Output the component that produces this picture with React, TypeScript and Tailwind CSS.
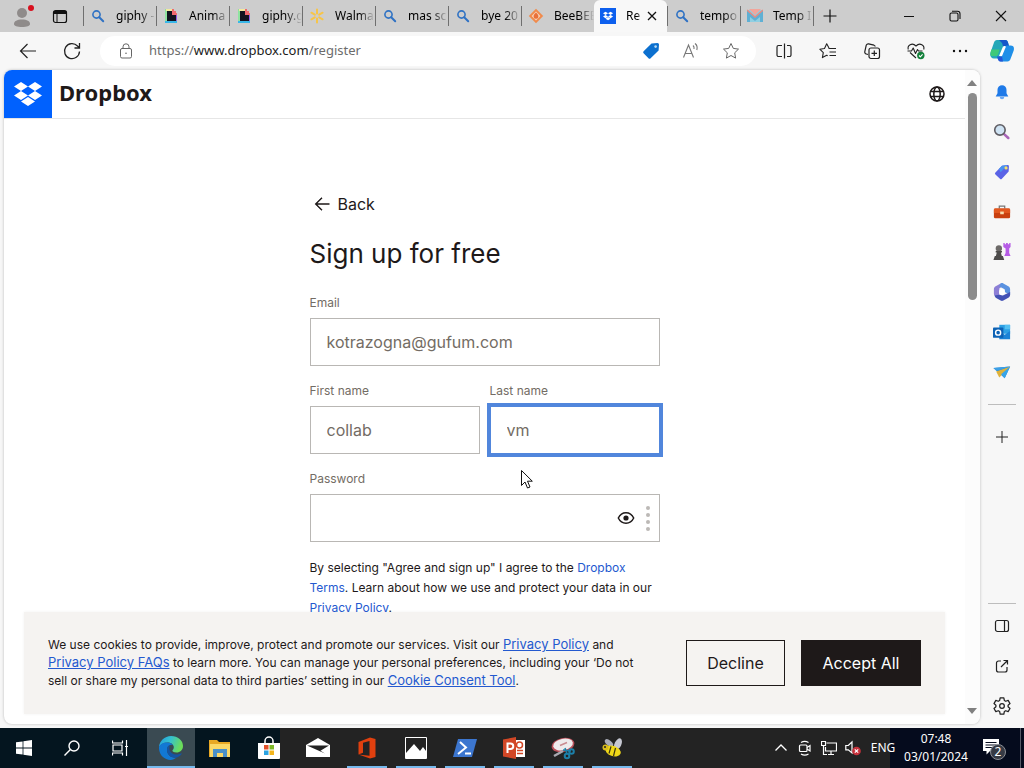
import { useState } from "react";
import type { ReactNode } from "react";

const SearchIcon = () => (
  <svg viewBox="0 0 16 16" className="size-4" fill="none" stroke="#2f72c4">
    <circle cx="6.5" cy="6.5" r="3.6" strokeWidth="1.6" />
    <path d="M9.2 9.2l4 4" strokeWidth="2" strokeLinecap="round" />
  </svg>
);

const GiphyIcon = () => (
  <svg viewBox="0 0 16 16" className="size-4">
    <path d="M2 1h2v13H2z" fill="#8fe3a0" />
    <path d="M3 1h6v2H3z" fill="#f3e9a0" />
    <path d="M12 6h2v8h-2z" fill="#8f5be8" />
    <path d="M2 13h12v2H2z" fill="#39b6e8" />
    <path d="M9 1h2v2h2v2h1v2H9z" fill="#ef6a6f" />
    <path d="M4 3h5v4h4v6H4z" fill="#12131f" />
  </svg>
);

const WalmartIcon = () => (
  <svg viewBox="0 0 16 16" className="size-4" stroke="#f7c548" strokeWidth="2" strokeLinecap="round">
    <path d="M8 1.500v4M8 10.500v4M2.400 4.700l3.400 2M10.200 9.300l3.400 2M13.600 4.700l-3.400 2M5.800 9.300l-3.400 2" />
  </svg>
);

const GitIcon = () => (
  <svg viewBox="0 0 16 16" className="size-4">
    <path d="M8 .8L15.200 8 8 15.200.8 8z" fill="#f08a4b" />
    <path d="M8 3.600L12.400 8 8 12.400 3.600 8z" fill="#f7d3bb" />
    <path d="M8 4.600c2 1.600 2.400 3 2.400 3.800A2.300 2.300 0 018 10.800a2.300 2.300 0 01-2.400-2.400c0-.8.4-2.200 2.400-3.800z" fill="#e8703a" />
  </svg>
);

const MailTabIcon = () => (
  <svg viewBox="0 0 16 16" className="size-4">
    <path d="M0 2h16v12H0z" fill="#8fcfe2" />
    <path d="M2 1h12L8 7z" fill="#f2a59b" />
    <path d="M0 2l8 7 8-7v12h-3V9l-5 4-5-4v5H0z" fill="#5fb0d4" />
    <path d="M0 2l8 7 8-7" stroke="#e98b80" strokeWidth="1.500" fill="none" />
  </svg>
);

const DROPBOX_PATH =
  "M6 1.8L0 5.6l6 3.8 6-3.8zM18 1.8l-6 3.8 6 3.8 6-3.8zM0 13.3l6 3.8 6-3.8-6-3.9zM18 9.4l-6 3.9 6 3.8 6-3.8zM6 18.4l6 3.8 6-3.8-6-3.9z";

const DropboxIcon = () => (
  <svg viewBox="0 0 16 16" className="size-4">
    <path d="M0 0h16v16H0z" fill="#0d5fee" />
    <path d={DROPBOX_PATH} fill="#fff" transform="translate(3 3) scale(.42)" />
  </svg>
);

type Tab = { title: string; icon: ReactNode; active?: boolean };

const tabs: Tab[] = [
  { title: "giphy -", icon: <SearchIcon /> },
  { title: "Anima", icon: <GiphyIcon /> },
  { title: "giphy.g", icon: <GiphyIcon /> },
  { title: "Walma", icon: <WalmartIcon /> },
  { title: "mas sc", icon: <SearchIcon /> },
  { title: "bye 20", icon: <SearchIcon /> },
  { title: "BeeBEE", icon: <GitIcon /> },
  { title: "Re", icon: <DropboxIcon />, active: true },
  { title: "tempo", icon: <SearchIcon /> },
  { title: "Temp I", icon: <MailTabIcon /> },
];

const TabBar = () => (
  <div className="flex h-8 shrink-0 items-stretch bg-[#cdcdcd] text-black">
    <button aria-label="Profile" className="flex w-11 items-center justify-center">
      <svg viewBox="0 0 24 24" className="size-6" fill="#8f8b8a">
        <circle cx="12" cy="9" r="5" />
        <path d="M4 20c0-3 3-4.500 8-4.500s8 1.500 8 4.500c0 2-3 3-8 3s-8-1-8-3z" />
        <circle cx="21" cy="4" r="3" fill="#d8101e" />
      </svg>
    </button>
    <button aria-label="Tab actions" className="flex w-8 items-center justify-center">
      <svg viewBox="0 0 16 16" className="size-4" fill="none" stroke="#111">
        <rect x="1.500" y="2.500" width="13" height="12" rx="2" strokeWidth="1.200" />
        <path d="M2 3.500h12v2H2z" fill="#111" />
        <path d="M5 5v9" />
      </svg>
    </button>
    <div role="tablist" className="ml-[7px] flex min-w-0">
      {tabs.map((tab, i) => (
        <div
          key={i}
          role="tab"
          aria-selected={!!tab.active}
          className={
            tab.active
              ? "flex w-[73px] items-center rounded-t-md bg-[#f8f8f8] pl-1.5"
              : "my-1.5 flex w-[73px] items-center border-l border-[#6f6f6f] pl-1.5"
          }
        >
          <span className="shrink-0">{tab.icon}</span>
          <span
            className={
              tab.active
                ? "ml-2.5 w-4 overflow-hidden text-xs whitespace-nowrap [mask-image:linear-gradient(90deg,#000_70%,transparent)]"
                : "ml-2.5 w-10 overflow-hidden text-xs whitespace-nowrap [mask-image:linear-gradient(90deg,#000_60%,transparent)]"
            }
          >
            {tab.title}
          </span>
          {tab.active && (
            <button aria-label="Close tab" className="ml-0.5">
              <svg viewBox="0 0 16 16" className="size-4" stroke="#111" strokeWidth="1.300">
                <path d="M4 4l8 8M12 4l-8 8" />
              </svg>
            </button>
          )}
        </div>
      ))}
    </div>
    <button aria-label="New tab" className="my-1.5 flex w-8 items-center justify-center border-l border-[#6f6f6f]">
      <svg viewBox="0 0 16 16" className="size-4" stroke="#111" strokeWidth="1.200">
        <path d="M8 1.500v13M1.500 8h13" />
      </svg>
    </button>
    <div className="ml-auto flex">
      <button aria-label="Minimize" className="flex w-[46px] items-center justify-center">
        <svg viewBox="0 0 12 12" className="size-3" stroke="#111">
          <path d="M1 6.500h10" />
        </svg>
      </button>
      <button aria-label="Restore" className="flex w-[46px] items-center justify-center">
        <svg viewBox="0 0 12 12" className="size-3" fill="none" stroke="#111" strokeWidth="1.100">
          <rect x="1" y="3" width="8" height="8" rx="1.500" />
          <path d="M3 1.200h5.500a2.500 2.500 0 012.500 2.500V9" />
        </svg>
      </button>
      <button aria-label="Close" className="flex w-[46px] items-center justify-center">
        <svg viewBox="0 0 12 12" className="size-3" stroke="#111" strokeWidth="1.100">
          <path d="M1 1l10 10M11 1L1 11" />
        </svg>
      </button>
    </div>
  </div>
);

const Toolbar = () => (
  <div className="flex h-[38px] shrink-0 items-center pl-3">
    <button aria-label="Back" className="flex w-8 justify-center">
      <svg viewBox="0 0 20 20" className="size-5" fill="none" stroke="#222" strokeWidth="1.200">
        <path d="M18 10H2.500M9.500 3L2.500 10l7 7" />
      </svg>
    </button>
    <button aria-label="Refresh" className="ml-3 flex w-8 justify-center">
      <svg viewBox="0 0 20 20" className="size-5" fill="none" stroke="#222" strokeWidth="1.300">
        <path d="M17.500 10.500A7.500 7.500 0 1115.500 5l1.700 1.500M17.500 2v5h-5" />
      </svg>
    </button>
    <div className="ml-3 flex h-[30px] min-w-0 flex-1 items-center rounded-full bg-white pr-[15px] pl-[18px]">
      <svg viewBox="0 0 16 16" className="size-4 shrink-0" fill="none" stroke="#666">
        <rect x="2.500" y="5.500" width="11" height="9.500" rx="1.500" />
        <path d="M5 5.500V3.800a3 3 0 016 0v1.700" />
        <circle cx="8" cy="10.300" r=".8" fill="#666" stroke="none" />
      </svg>
      <a href="https://www.dropbox.com/register" className="ml-[15px] truncate text-[13px] text-[#6c6c6c]">
        https://<span className="text-[#1b1b1b]">www.dropbox.com</span>/register
      </a>
      <div className="ml-auto flex shrink-0 items-center gap-5">
        <button aria-label="Shopping">
          <svg viewBox="0 0 20 20" className="size-5">
            <path d="M10.500 2.500l6-.500a1.500 1.500 0 011.500 1.500l-.400 6-8 7.700a1.500 1.500 0 01-2.100 0L2.600 12.300a1.500 1.500 0 010-2.100z" fill="#0c70cf" />
            <circle cx="14.600" cy="5.600" r="1.300" fill="#b8d8f0" />
          </svg>
        </button>
        <button aria-label="Read aloud">
          <svg viewBox="0 0 20 20" className="size-5" fill="none" stroke="#777" strokeWidth="1.100">
            <path d="M2.500 16.500L7.500 4l5 12.500M4.200 12.500h6.600M12 4.500c1 .8 1.300 2 1 3.500M14 2.500c2 1.500 2.500 4 1.800 6.500" />
          </svg>
        </button>
        <button aria-label="Add to favourites">
          <svg viewBox="0 0 20 20" className="size-5" fill="none" stroke="#666" strokeLinejoin="round">
            <path d="M10 2.500l2.300 4.900 5.200.7-3.800 3.700.9 5.300-4.600-2.600-4.600 2.600.9-5.300-3.800-3.700 5.200-.7z" />
          </svg>
        </button>
      </div>
    </div>
    <div className="ml-[18px] flex shrink-0 items-center gap-6 pr-[10px]">
      <button aria-label="Split screen">
        <svg viewBox="0 0 20 20" className="size-5" fill="none" stroke="#222" strokeWidth="1.200">
          <path d="M8 4.500H4.500A1.500 1.500 0 003 6v8a1.500 1.500 0 001.500 1.500H8M10.500 2.500v15M13 4.500h2.500A1.500 1.500 0 0117 6v8a1.500 1.500 0 01-1.500 1.500H13" />
        </svg>
      </button>
      <button aria-label="Favourites">
        <svg viewBox="0 0 20 20" className="size-5" fill="none" stroke="#222" strokeWidth="1.100" strokeLinejoin="round">
          <path d="M11 7L8.700 2.800 6.500 7.500l-4.700.7 3.500 3.400-.9 5 4.300-2.300 1 .5M10.500 7.500H18M11.500 11H18M11.500 14.500H18" />
        </svg>
      </button>
      <button aria-label="Collections">
        <svg viewBox="0 0 20 20" className="size-5" fill="none" stroke="#222" strokeWidth="1.200">
          <path d="M6 13.500L4.300 13a2 2 0 01-1.500-2.400l1.400-6.200a2 2 0 012.400-1.500l5.400 1.300a2 2 0 011.300 1.300" />
          <rect x="7" y="7" width="10.500" height="10.500" rx="2" fill="#f7f7f7" />
          <path d="M12.300 9.500v5.500M9.500 12.300H15" />
        </svg>
      </button>
      <button aria-label="Browser essentials">
        <svg viewBox="0 0 20 20" className="size-5" fill="none" stroke="#222" strokeWidth="1.100" strokeLinejoin="round">
          <path d="M2.300 8.500C1 4.500 6 1 10 5c4-4 9-.5 7.700 3.500M4 11.500l6 5.500M1.500 10h4l1.700-3 2.300 5.500 2-4 1 1.500h4" />
          <circle cx="14.800" cy="14.500" r="3.700" fill="#13803a" stroke="none" />
          <path d="M13 14.500l1.300 1.300 2.300-2.500" stroke="#fff" />
        </svg>
      </button>
      <button aria-label="Settings and more">
        <svg viewBox="0 0 20 20" className="size-5" fill="#111">
          <circle cx="4" cy="10" r="1.200" />
          <circle cx="10" cy="10" r="1.200" />
          <circle cx="16" cy="10" r="1.200" />
        </svg>
      </button>
    </div>
  </div>
);

const sidebarApps = [
  {
    label: "Notifications",
    icon: (
      <>
        <path d="M10 2.500a5 5 0 00-5 5v4L3 15h14l-2-3.500v-4a5 5 0 00-5-5z" fill="#1f7ae8" />
        <path d="M7.500 15.500h5a2.500 2.500 0 01-5 0z" fill="#6aa9f5" />
      </>
    ),
  },
  {
    label: "Search",
    icon: (
      <>
        <path d="M12 12l5 4.700" stroke="#a865b8" strokeWidth="2.800" strokeLinecap="round" />
        <circle cx="7.700" cy="7.700" r="5.800" fill="#cfe3f3" stroke="#5f5d63" strokeWidth="1.800" />
      </>
    ),
  },
  {
    label: "Shopping",
    icon: (
      <>
        <path d="M10 3l6-.700c1 0 1.700.600 1.700 1.500l-.300 5.700-7.500 8a1.500 1.500 0 01-2.200 0l-5-4.800a1.500 1.500 0 010-2.200z" fill="#5a63e6" />
        <path d="M6.500 6.700L10 3l6-.700-7.500 8z" fill="#4a94f0" />
        <circle cx="14.500" cy="5.500" r="1.800" fill="#f5e26a" />
      </>
    ),
  },
  {
    label: "Tools",
    icon: (
      <>
        <path d="M7 6V3.500h6V6" stroke="#777" strokeWidth="1.400" fill="none" />
        <rect x="1" y="6" width="18" height="11" rx="1.500" fill="#c9400f" />
        <path d="M1 7.500A1.500 1.500 0 012.500 6h15A1.500 1.500 0 0119 7.500V11H1z" fill="#e2571e" />
        <rect x="8" y="9.500" width="4" height="3" fill="#f6dcae" />
      </>
    ),
  },
  {
    label: "Games",
    icon: (
      <>
        <path d="M11.500 0H13v1.500h1.500V0h2v1.500H18V0h1.500v4.500L18 6v5l1.500 3.500h-7L14 11V6l-2.500-1.500z" fill="#b65ce6" />
        <circle cx="6.500" cy="6" r="3.500" fill="#6d6a68" />
        <path d="M3 9h7v1.500H8.800l1 4H11l1.500 4.500H.500L2 14.500h1.200l1-4H3z" fill="#4e4c4b" />
      </>
    ),
  },
  {
    label: "Microsoft 365",
    icon: (
      <>
        <path d="M1 7c0-1.500.7-2.500 2-3.300L8.500.5 12 2.500 7 6v7l-3.500 2C2 14.500 1 13.500 1 12z" fill="#8d7fd6" />
        <path d="M8.500.5c1-.6 2-.6 3 0L17 3.700c1.300.8 2 1.800 2 3.300v6l-6-3V7L7 4z" fill="#5a92e0" />
        <path d="M19 10v3c0 1.500-.7 2.500-2 3.300l-5.500 3.200c-1 .6-2 .6-3 0L3 16.300 1.500 14 7 13l4 1z" fill="#4352b5" />
        <path d="M10 6.300l3.200 1.900v3.600L10 13.700l-3.200-1.900V8.200z" fill="#fff" />
      </>
    ),
  },
  {
    label: "Outlook",
    icon: (
      <>
        <path d="M7 2h12v10H7z" fill="#2c9fe4" />
        <path d="M13 2h6v5h-6z" fill="#53c0f2" />
        <path d="M7 9l6 4 6-4v9H7z" fill="#1a82d6" />
        <rect x="0" y="5" width="11.500" height="11.500" rx="1" fill="#0d62b5" />
        <circle cx="5.700" cy="10.700" r="2.800" fill="none" stroke="#fff" strokeWidth="1.600" />
      </>
    ),
  },
  {
    label: "Drop",
    icon: (
      <>
        <path d="M.500 5.500L19 4l-6 13z" fill="#2388d8" />
        <path d="M19 4L3.500 9.500 7 16z" fill="#dfb23a" />
        <path d="M.500 5.500L19 4 4 9z" fill="#3da0e6" />
        <path d="M19 4L9 12.500l4 4.500z" fill="#37a4e8" />
      </>
    ),
  },
];

const Sidebar = () => (
  <aside className="flex w-11 shrink-0 flex-col items-center">
    <button aria-label="Copilot" className="flex h-[38px] w-full items-center justify-center">
      <svg viewBox="0 0 24 24" className="size-6">
        <path d="M7 1h8.500c1.500 0 2 1 2.500 2.500L19 7h-5l-3 10c-.500 1.500-1.200 2.500-3 2.500H4C1 19.500-.500 17 .500 13.500L4 3.500C4.500 2 5.500 1 7 1z" fill="#25a8b8" />
        <path d="M1.500 10.500h8L8 15.500c-.500 1-1.500 1.500-2.500 1.500H1C0 15 .500 13 1.500 10.500z" fill="#3fc978" />
        <path d="M9 1h6.500c1.500 0 2 1 2.500 2.500L19 7h-6l-1-3z" fill="#1657c9" />
        <path d="M17 6.500h3.500c3 0 4 2 3.200 5l-3.200 8.500c-.500 1.500-1.500 2.500-3 2.500H11c-2 0-2.500-1-3-3 2 0 3-1 3.500-2.500l3-8c.500-1.500 1-2.500 2.500-2.500z" fill="#1f8fe8" />
        <path d="M7 17.500h5l1 5h-2.500c-2 0-2.500-1.500-3.500-5z" fill="#2456d6" />
        <path d="M13 7.500h3l-4 9.500H9z" fill="#fff" />
      </svg>
    </button>
    <nav className="mt-0.5 flex flex-col">
      {sidebarApps.map((app) => (
        <button key={app.label} aria-label={app.label} className="flex h-10 w-11 items-center justify-center">
          <svg viewBox="0 0 20 20" className="size-[18px]">
            {app.icon}
          </svg>
        </button>
      ))}
    </nav>
    <div className="mt-3 h-px w-7 bg-[#bdbdbd]" />
    <button aria-label="Customize" className="mt-3 flex h-10 w-11 items-center justify-center">
      <svg viewBox="0 0 14 14" className="size-3.5" stroke="#222">
        <path d="M7 1v12M1 7h12" />
      </svg>
    </button>
    <div className="mt-auto h-px w-7 bg-[#bdbdbd]" />
    <div className="mt-0.5 mb-0.5 flex flex-col">
      <button aria-label="Hide sidebar" className="flex h-10 w-11 items-center justify-center">
        <svg viewBox="0 0 16 16" className="size-4" fill="none" stroke="#222" strokeWidth="1.200">
          <rect x="1.500" y="2.500" width="13" height="11" rx="2" />
          <path d="M10.500 2.500v11" />
        </svg>
      </button>
      <button aria-label="Open link" className="flex h-10 w-11 items-center justify-center">
        <svg viewBox="0 0 16 16" className="size-4" fill="none" stroke="#222" strokeWidth="1.200">
          <path d="M7 3H4.500a2 2 0 00-2 2v7a2 2 0 002 2h6.500a2 2 0 002-2V9M9.500 2.500h4v4M13.500 2.500L7 9" />
        </svg>
      </button>
      <button aria-label="Settings" className="flex h-10 w-11 items-center justify-center">
        <svg viewBox="0 0 24 24" className="size-5" fill="none" stroke="#222" strokeWidth="1.500" strokeLinejoin="round">
          <path d="M9.800 2.300h4.400l.6 3 1.700 1 2.900-1 2.200 3.800-2.300 2v1.900l2.300 2-2.200 3.700-2.900-1-1.700 1-.6 3H9.800l-.6-3-1.700-1-2.900 1L2.400 15l2.300-2v-1.900l-2.300-2 2.200-3.800 2.900 1 1.700-1z" />
          <circle cx="12" cy="12" r="2.800" />
        </svg>
      </button>
    </div>
  </aside>
);

const fieldClass =
  "h-12 w-full border border-[#b9b7b4] bg-white px-4 text-base text-[#736c64] focus:outline-none";

const SignupForm = () => {
  const [form, setForm] = useState({
    email: "kotrazogna@gufum.com",
    first: "collab",
    last: "vm",
    password: "",
  });

  const update = (e: React.ChangeEvent<HTMLInputElement>) =>
    setForm({ ...form, [e.target.name]: e.target.value });

  return (
    <form className="mx-auto w-full max-w-[350px] pt-[73px]" onSubmit={(e) => e.preventDefault()}>
      <button type="button" className="flex h-6 items-center gap-2 pl-1 text-base text-[#1e1919]">
        <svg viewBox="0 0 16 16" className="size-4" fill="none" stroke="#1e1919" strokeWidth="1.400">
          <path d="M15.500 8H2M8 1.700L1.700 8 8 14.300" />
        </svg>
        Back
      </button>
      <h1 className="mt-[22px] text-[26px] leading-8 text-[#1e1919]">Sign up for free</h1>
      <label htmlFor="email" className="mt-[25px] block text-xs text-[#736c64]">
        Email
      </label>
      <input id="email" name="email" type="email" value={form.email} onChange={update} className={`mt-[7px] ${fieldClass}`} />
      <div className="mt-[17px] grid grid-cols-2 gap-2.5">
        <div>
          <label htmlFor="first" className="block text-xs text-[#736c64]">
            First name
          </label>
          <input id="first" name="first" value={form.first} onChange={update} className={`mt-[7px] ${fieldClass}`} />
        </div>
        <div>
          <label htmlFor="last" className="block text-xs text-[#736c64]">
            Last name
          </label>
          <input
            id="last"
            name="last"
            value={form.last}
            onChange={update}
            className="mt-[7px] h-12 w-full border border-[#5186dc] bg-white px-4 text-base text-[#736c64] ring-3 ring-[#5186dc] focus:outline-none"
          />
        </div>
      </div>
      <label htmlFor="password" className="mt-[17px] block text-xs text-[#736c64]">
        Password
      </label>
      <div className="mt-[7px] flex h-12 items-center border border-[#b9b7b4] pr-[9px]">
        <input
          id="password"
          name="password"
          type="password"
          value={form.password}
          onChange={update}
          className="h-full min-w-0 flex-1 px-4 text-base focus:outline-none"
        />
        <button type="button" aria-label="Show password">
          <svg viewBox="0 0 18 18" className="size-[18px]" fill="none" stroke="#1e1919" strokeWidth="1.500">
            <path d="M1.300 9C3 5.500 5.700 3.800 9 3.800S15 5.500 16.700 9c-1.700 3.500-4.400 5.200-7.700 5.200S3 12.500 1.300 9z" />
            <circle cx="9" cy="9" r="2.600" fill="#1e1919" stroke="none" />
          </svg>
        </button>
        <div className="ml-[11px] flex flex-col gap-[3px]">
          <span className="size-1 rounded-full bg-[#bcb9b6]" />
          <span className="size-1 rounded-full bg-[#bcb9b6]" />
          <span className="size-1 rounded-full bg-[#bcb9b6]" />
          <span className="size-1 rounded-full bg-[#bcb9b6]" />
        </div>
      </div>
      <p className="mt-4 text-xs leading-5 text-[#1e1919]">
        By selecting "Agree and sign up" I agree to the{" "}
        <a href="/terms" className="text-[#2459cf]">
          Dropbox Terms
        </a>
        . Learn about how we use and protect your data in our{" "}
        <a href="/privacy" className="text-[#2459cf]">
          Privacy Policy
        </a>
        .
      </p>
    </form>
  );
};

const CookieBanner = () => (
  <div className="absolute inset-x-5 bottom-[10px] flex h-[102px] items-start bg-[#f5f3f1] p-6 text-[#1e1919] shadow-[0_0_3px_rgba(0,0,0,0.06)]">
    <p className="w-[600px] text-xs leading-[18px]">
      We use cookies to provide, improve, protect and promote our services. Visit our{" "}
      <a href="/privacy" className="text-[13px] leading-none text-[#2459cf] underline">
        Privacy Policy
      </a>{" "}
      and{" "}
      <a href="/privacy-faq" className="text-[13px] leading-none text-[#2459cf] underline">
        Privacy Policy FAQs
      </a>{" "}
      to learn more. You can manage your personal preferences, including your ‘Do not sell or share my personal data to
      third parties’ setting in our{" "}
      <a href="/cookies" className="text-[13px] leading-none text-[#2459cf] underline">
        Cookie Consent Tool
      </a>
      .
    </p>
    <div className="mt-1 ml-auto flex shrink-0 gap-4">
      <button className="h-[46px] w-[99px] border border-[#1e1919] text-base">Decline</button>
      <button className="h-[46px] w-[120px] bg-[#1e1919] text-base text-white">Accept All</button>
    </div>
  </div>
);

const WebPage = () => (
  <main className="relative mb-1 ml-1 flex min-h-0 flex-1 overflow-hidden rounded-lg bg-white font-[Inter,'Liberation_Sans',sans-serif] shadow-[0_0_3px_rgba(0,0,0,0.25)]">
    <div className="relative min-w-0 flex-1 overflow-hidden">
      <header className="flex h-[49px] items-start border-b border-[#e6e6e6]">
        <a href="/" aria-label="Home" className="flex size-12 items-center justify-center bg-[#0061fe]">
          <svg viewBox="0 0 24 24" className="size-7" fill="#fff">
            <path d={DROPBOX_PATH} />
          </svg>
        </a>
        <span className="ml-[7px] font-['Noto_Sans',sans-serif] text-[22px] leading-[45px] font-bold text-[#1e1919]">
          Dropbox
        </span>
        <button aria-label="Language" className="mr-5 ml-auto flex h-12 items-center">
          <svg viewBox="0 0 16 16" className="size-4" fill="none" stroke="#1e1919" strokeWidth="1.500">
            <circle cx="8" cy="8" r="7" />
            <ellipse cx="8" cy="8" rx="3.200" ry="7" />
            <path d="M1.500 5.500h13M1.500 10.500h13" />
          </svg>
        </button>
      </header>
      <SignupForm />
      <CookieBanner />
    </div>
    <div className="flex w-[15px] flex-col items-center bg-[#fcfcfc] py-2.5 pr-px">
      <svg viewBox="0 0 10 6" className="h-1.5 w-2.5 shrink-0" fill="#808080">
        <path d="M0 6l5-6 5 6z" />
      </svg>
      <div className="mt-[7px] h-[207px] w-[9px] rounded-full bg-[#8b8b8b]" />
      <svg viewBox="0 0 10 6" className="mt-auto h-1.5 w-2.5 shrink-0" fill="#808080">
        <path d="M0 0l5 6 5-6z" />
      </svg>
    </div>
  </main>
);

const taskbarApps = [
  {
    label: "File Explorer",
    icon: (
      <>
        <path d="M1 4h8l2 2h11v15H1z" fill="#e8a824" />
        <path d="M2 8h20v13H2z" fill="#fbd867" />
        <path d="M5 13h14v8h-4v-4H9v4H5z" fill="#4a90c8" />
      </>
    ),
  },
  {
    label: "Store",
    icon: (
      <>
        <path d="M8 8V5a4 4 0 018 0v3" stroke="#fff" strokeWidth="1.500" fill="none" />
        <path d="M1 7h22v15a1 1 0 01-1 1H2a1 1 0 01-1-1z" fill="#fff" />
        <path d="M7 9h4.500v4.500H7z" fill="#e2512a" />
        <path d="M12.500 9H17v4.500h-4.500z" fill="#7db928" />
        <path d="M7 14.500h4.500V19H7z" fill="#2ba3e3" />
        <path d="M12.500 14.500H17V19h-4.500z" fill="#f3b51c" />
      </>
    ),
  },
  {
    label: "Mail",
    icon: (
      <>
        <path d="M0 9l12-7 12 7v12H0z" fill="#fff" />
        <path d="M1 9.500h22l-8.500 5.300 4.500 2.700z" fill="#232323" />
      </>
    ),
  },
  {
    label: "Office",
    running: true,
    icon: (
      <path d="M3.500 6L15 1.500l5.500 1.500v18L15 22.500 3.500 18.500l11 1.300V5L8 6.700v10l-4.500 1.800z" fill="#e0400f" />
    ),
  },
  {
    label: "Photos",
    running: true,
    icon: (
      <>
        <path d="M1.500 1.500h21v21h-21z" fill="none" stroke="#fff" />
        <path d="M2 17l8-9 6 7 3-4 3 4v7H2z" fill="#fff" />
      </>
    ),
  },
  {
    label: "PowerShell",
    running: true,
    icon: (
      <>
        <path d="M5 3h19l-5 18H0z" fill="#3c76cf" />
        <path d="M7 6l6 5.500L5 18M12 17.500h6" stroke="#fff" strokeWidth="2" fill="none" />
      </>
    ),
  },
  {
    label: "PowerPoint",
    running: true,
    icon: (
      <>
        <path d="M13 4h10v17H13z" fill="#fff" />
        <circle cx="17.500" cy="9" r="3" fill="none" stroke="#d24726" strokeWidth="1.500" />
        <path d="M15 14.500h6M15 17.500h6" stroke="#d24726" strokeWidth="1.500" />
        <path d="M1 3.500L14 1v22L1 20.500z" fill="#d24726" />
        <path d="M5.500 17V7.500h3a2.700 2.700 0 010 5.500h-3" stroke="#fff" strokeWidth="2" fill="none" />
      </>
    ),
  },
  {
    label: "Snipping Tool",
    running: true,
    icon: (
      <>
        <ellipse cx="12" cy="9" rx="11.500" ry="7" fill="#b9505a" transform="rotate(-12 12 9)" />
        <ellipse cx="12" cy="8.500" rx="10" ry="5.700" fill="#eeeaec" transform="rotate(-12 12 8.500)" />
        <path d="M9 9.500l7-3" stroke="#c98a90" strokeWidth="1.500" />
        <path d="M3 20l9-5" stroke="#a8a8b0" strokeWidth="2.500" />
        <circle cx="16" cy="20" r="2.300" fill="none" stroke="#1c7fa8" strokeWidth="2" />
        <circle cx="20.500" cy="15.500" r="2.300" fill="none" stroke="#1c7fa8" strokeWidth="2" />
        <path d="M12 14l8 1M14 12l2 6" stroke="#1c7fa8" strokeWidth="1.500" />
      </>
    ),
  },
  {
    label: "BeeBEEP",
    running: true,
    icon: (
      <>
        <ellipse cx="9" cy="7" rx="5" ry="2.600" fill="#a9acb8" transform="rotate(40 9 7)" />
        <ellipse cx="18" cy="8" rx="6" ry="3.400" fill="#c6c8d2" transform="rotate(-65 18 8)" />
        <ellipse cx="13" cy="15" rx="8" ry="5" fill="#f0d818" transform="rotate(20 13 15)" />
        <path d="M11 10.500l-2 7M15.500 12l-2 8" stroke="#3b3410" strokeWidth="1.200" />
        <circle cx="5.500" cy="11.500" r="3" fill="#d9bd1c" />
        <circle cx="5" cy="11" r="1" fill="#222" />
      </>
    ),
  },
];

const Taskbar = () => (
  <footer className="flex h-10 shrink-0 bg-[linear-gradient(90deg,#04151f_280px,#232323_280px,#232323_calc(100%-134px),#050b1d_calc(100%-134px))] text-white">
    <button aria-label="Start" className="flex w-12 items-center justify-center">
      <svg viewBox="0 0 16 16" className="size-4" fill="#fff">
        <path d="M0 2.300l6.600-.9v6.200H0zM7.400 1.300L16 0v7.600H7.400zM0 8.400h6.600v6.200L0 13.700zM7.400 8.400H16V16l-8.600-1.200z" />
      </svg>
    </button>
    <button aria-label="Search" className="flex w-12 items-center justify-center">
      <svg viewBox="0 0 16 16" className="size-4" fill="none" stroke="#fff" strokeWidth="1.400">
        <circle cx="10" cy="6" r="5" />
        <path d="M6.400 9.600L.5 15.500" />
      </svg>
    </button>
    <button aria-label="Task view" className="mr-[3px] flex w-12 items-center justify-center">
      <svg viewBox="0 0 16 16" className="size-4" fill="none" stroke="#fff" strokeWidth="1.200">
        <path d="M.5.500v2.500h10V.500M.5 15.500V13h10v2.500M1 5h9v6H1zM14.500 0v16M13 6.500h3" />
      </svg>
    </button>
    <button aria-label="Edge" className="flex w-12 items-center justify-center border-b-2 border-[#76b9ed] bg-[#3a4a52] pt-0.5">
      <svg viewBox="0 0 24 24" className="size-6">
        <defs>
          <linearGradient id="edgeTop" x1="0" y1="0" x2="1" y2=".3">
            <stop offset="0" stopColor="#1f9be0" />
            <stop offset=".5" stopColor="#35c1cf" />
            <stop offset="1" stopColor="#6bdc5a" />
          </linearGradient>
        </defs>
        <path d="M0 11C.5 5 5.500 0 12 0c7 0 12 4.500 12 10 0 4-3 6.500-6.500 6.500-3 0-4.500-1.200-4-2.200 1-1 1.300-2 1.300-3 0-2.500-2.500-4.800-6-4.800C4.500 6.500 1.500 8.500 0 11z" fill="url(#edgeTop)" />
        <path d="M0 11c1-2.500 4-4.500 8.500-4.500 2.500 0 4.500 1 5.500 2.500-4-1-6 1.500-6 5 0 5 4.500 8.500 9.500 7.500C15.500 23 14 24 11.500 24 5 24-.5 18.500 0 11z" fill="#1278d4" />
        <path d="M8 14c0-2.500 1-4.300 3-5-2 4 .5 9.500 6 9.500 2.500 0 4-.7 5.300-1.300.5 0 .6.300.3.800-1 1.500-2.600 2.800-4.600 3.500C12.500 22.500 8 19 8 14z" fill="#1454a4" />
      </svg>
    </button>
    <div className="ml-px flex gap-px">
      {taskbarApps.map((app) => (
        <button key={app.label} aria-label={app.label} className="flex w-12 flex-col items-center">
          <span className="flex flex-1 items-center pt-0.5">
            <svg viewBox="0 0 24 24" className="size-6">
              {app.icon}
            </svg>
          </span>
          <span className={app.running ? "h-0.5 w-10 bg-[#76b9ed]" : "h-0.5 w-10"} />
        </button>
      ))}
    </div>
    <div className="ml-auto flex items-center">
      <button aria-label="Show hidden icons" className="flex w-6 justify-center">
        <svg viewBox="0 0 16 16" className="size-4" fill="none" stroke="#fff" strokeWidth="1.300">
          <path d="M2.500 10.500L8 5l5.500 5.500" />
        </svg>
      </button>
      <button aria-label="Meet now" className="flex w-6 justify-center">
        <svg viewBox="0 0 16 16" className="size-4" fill="none" stroke="#fff" strokeWidth="1.200">
          <rect x="2.500" y="5" width="7.500" height="6.500" rx="1" />
          <path d="M10 7.500l3-2v5.500l-3-2M4 2.500c2.500-1.500 5-1.500 7.500 0M4 14c2.500 1.500 5 1.500 7.500 0" />
        </svg>
      </button>
      <button aria-label="Network" className="flex w-6 justify-center">
        <svg viewBox="0 0 16 16" className="size-4" fill="none" stroke="#fff" strokeWidth="1.200">
          <path d="M5.500 3h10v8h-11V7M7 14.500h6M10 11v3.500M.500 1.500h4v4h-4zM2.500 5.500v9H6" />
        </svg>
      </button>
      <button aria-label="Volume" className="flex w-6 justify-center">
        <svg viewBox="0 0 16 16" className="size-4" fill="none" stroke="#fff" strokeWidth="1.200">
          <path d="M.800 5.500h2.500L7 2v11L3.300 9.800H.800z" />
          <circle cx="11.500" cy="11" r="4.300" fill="#c8323c" stroke="none" />
          <path d="M9.800 9.300l3.400 3.400M13.200 9.300l-3.400 3.400" />
        </svg>
      </button>
      <button className="w-8 pl-1 text-center text-xs">ENG</button>
    </div>
    <button className="w-[85px] pr-[7px] text-center text-xs leading-[18px]">
      07:48
      <br />
      03/01/2024
    </button>
    <button aria-label="Notifications" className="flex w-[38px] items-center">
      <svg viewBox="0 0 24 24" className="size-6">
        <path d="M1 3h16v12H8l-3.500 3.500V15H1z" fill="#fff" />
        <path d="M3.500 6.500h11M3.500 9h11M3.500 11.500h7" stroke="#050b1d" />
        <circle cx="16" cy="16" r="7.500" fill="#363a44" stroke="#8b8e95" />
        <text x="16" y="20" fontSize="12" textAnchor="middle" fill="#fff">
          2
        </text>
      </svg>
    </button>
    <div className="mr-[3px] w-px bg-[#565b68]" />
  </footer>
);

const App = () => (
  <div className="flex h-screen flex-col overflow-hidden bg-[#f7f7f7] font-['Noto_Sans','Open_Sans',sans-serif]">
    <TabBar />
    <div className="flex min-h-0 flex-1">
      <div className="flex min-w-0 flex-1 flex-col">
        <Toolbar />
        <WebPage />
      </div>
      <Sidebar />
    </div>
    <Taskbar />
    <svg viewBox="0 0 14 20" className="pointer-events-none absolute top-[469px] left-[520px] h-5 w-3.5">
      <path d="M1.500 1.500v15l3.500-3.500 2.500 6 2.500-1-2.500-5.800h4.800z" fill="#fff" stroke="#111" />
    </svg>
  </div>
);

export default App;
